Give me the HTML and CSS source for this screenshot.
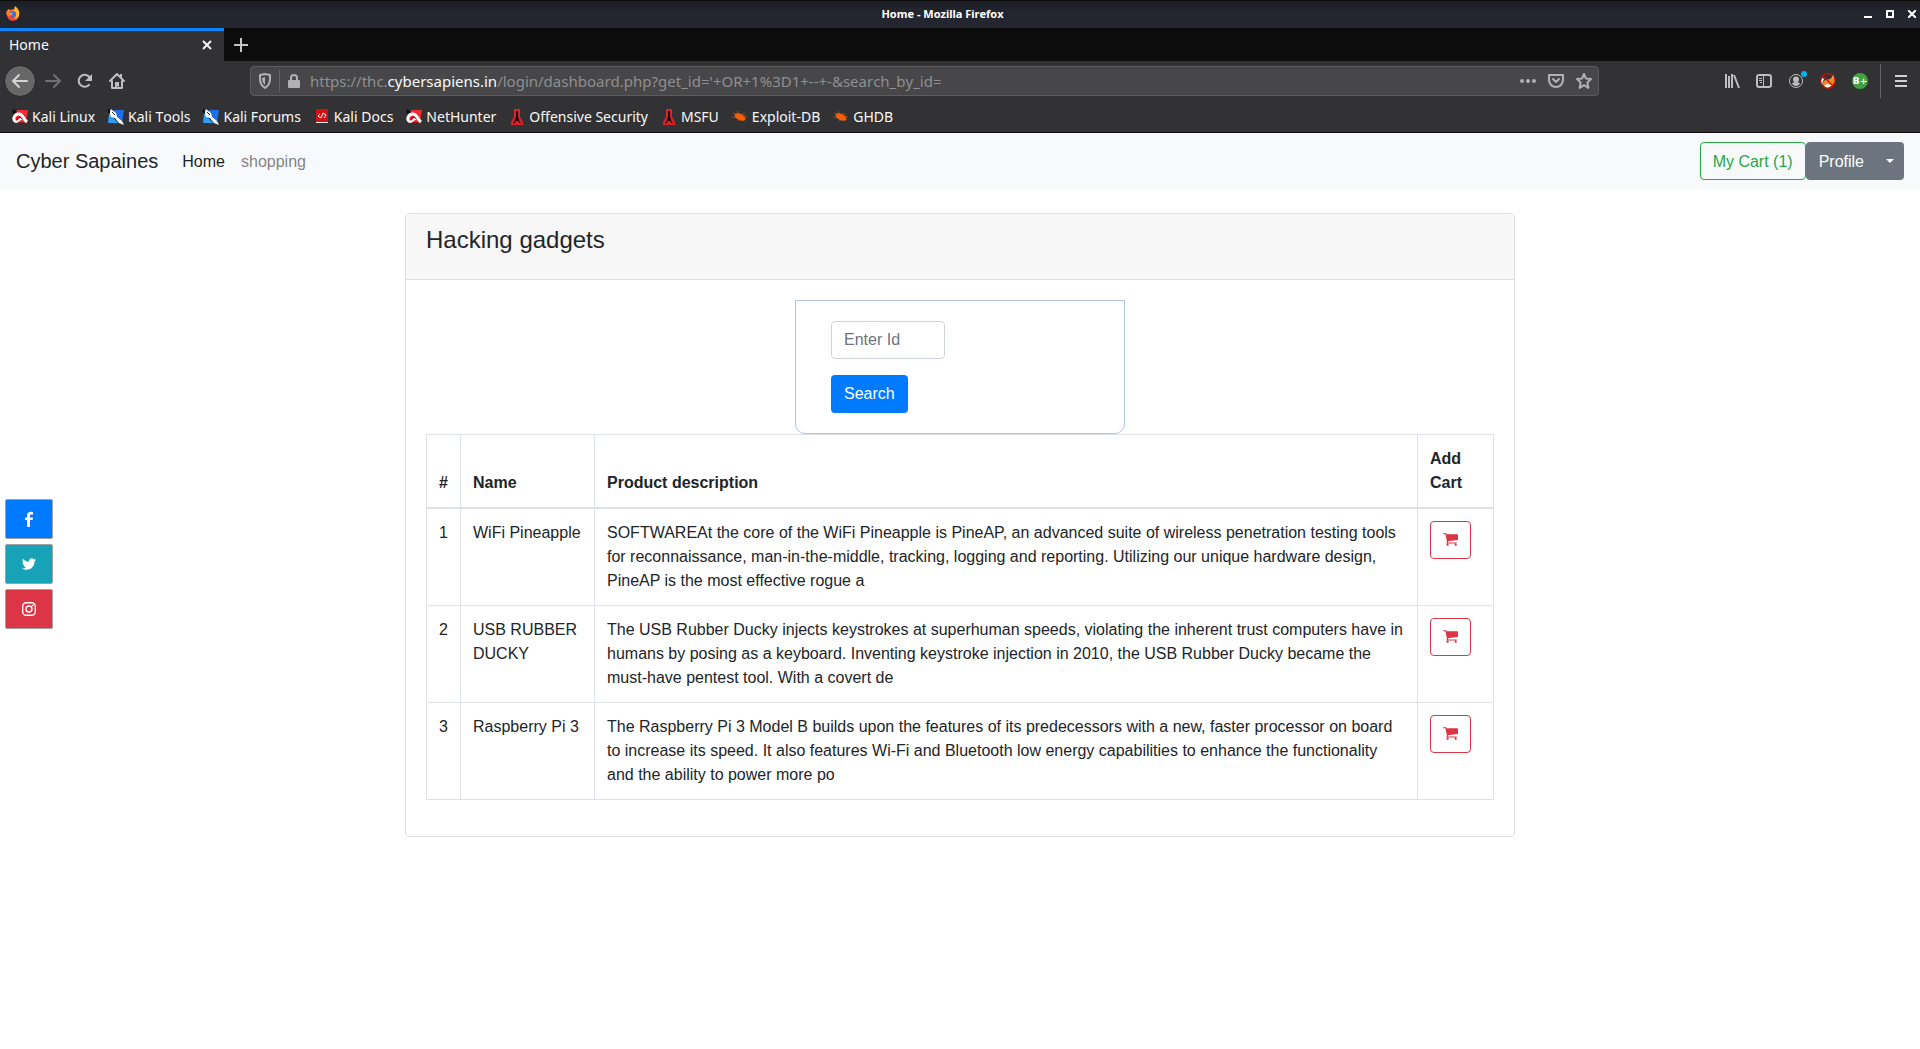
FILE: index.html
```html
<!DOCTYPE html>
<html lang="en">
<head>
<meta charset="utf-8">
<title>Home</title>
<link rel="stylesheet" href="styles.css">
</head>
<body>
<svg class="defs" width="0" height="0" aria-hidden="true">
  <symbol id="kali" viewBox="0 0 16 16"><path fill="#111" d="M0 0l7 3-6 2z"/><path fill="#f02b34" d="M5 1h11l-2 12H2z"/><path fill="#8d1722" d="M3 13h11l1 1H3z"/><path fill="none" stroke="#fff" stroke-width="3" d="M4 13C0 11 2 5 7 5c4 0 4 5 8 8"/><path fill="none" stroke="#fff" stroke-width="2" d="M4 13c3 0 3-4 6-3"/><path fill="none" stroke="#222" d="M5 11c0-3 4-4 5-1"/></symbol>
  <symbol id="knife" viewBox="0 0 16 16"><path fill="#1f6fe8" d="M5 1h11l-2 13-5-5z"/><path fill="#2b9df4" d="M1 4l9 10H0z"/><path fill="#111" d="M0 0l6 1-3 4-3-1z"/><path fill="#fff" d="M2 2l1-2 5 4 1 4 5 4 2 4-5-2-4-5-4-1-1-3z"/><path stroke="#222" d="M4 3l3 3"/></symbol>
  <symbol id="docs" viewBox="0 0 16 16"><path fill="#d40e12" d="M2 0h12v13H2z"/><path fill="#eee" d="M2 13h12v1H2z"/><path fill="#a00" d="M2 14h12v1H2z"/><path fill="none" stroke="#fff" d="M6 5L4 7l3 2 2-5 3 2-2 3"/></symbol>
  <symbol id="offsec" viewBox="0 0 16 16"><path fill="#d8232a" d="M5 0h6v8l3 5v3H2v-3l3-5z"/><path fill="#2a0808" d="M7 2h2v5l1 4 2 4-2-1-1-2H7l-1 2-2 1 2-4 1-4z"/></symbol>
  <symbol id="bug" viewBox="0 0 16 16"><path stroke="#9b4a1c" d="M1 4l5 3M0 8l6 1M5 2l3 4M9 5l4 0M6 12l2-3M12 7l3 1"/><ellipse cx="8" cy="8" rx="6" ry="3" fill="#f2600c" transform="rotate(28 8 8)"/></symbol>
  <symbol id="cart" viewBox="0 0 1664 1664"><path fill="currentColor" d="M640 1408q0 52-38 90t-90 38-90-38-38-90 38-90 90-38 90 38 38 90zm896 0q0 52-38 90t-90 38-90-38-38-90 38-90 90-38 90 38 38 90zm128-1088v512q0 24-16.500 42.500t-40.500 21.500l-1044 122q13 60 13 70 0 16-24 64h920q26 0 45 19t19 45-19 45-45 19H448q-26 0-45-19t-19-45q0-11 8-31.500t16-36 21.500-40 15.500-29.500L268 256H64q-26 0-45-19T0 192t19-45 45-19h256q16 0 28.500 6.500T368 150t13 24.500 8 26 5.500 29.500 4.500 26h1201q26 0 45 19t19 45z"/></symbol>
</svg>
<div class="browser">
  <div class="titlebar">
    <svg class="fox" width="16" height="16" viewBox="0 0 16 16"><circle cx="8" cy="9" r="6" fill="#f5413c"/><path fill="#ffb52b" d="M2 5l2-2 1 2 4-1 1-4c4 3 5 6 4 10-1 2-3 3-5 3 3-3 2-6-1-7z"/><path fill="#ff7a1f" d="M1 8l1-4 3 2 1 2-2 3z"/><circle cx="8" cy="8" r="3" fill="#426cd8"/><path fill="#ff9c28" d="M4 7l4 0-2 3z"/></svg>
    <span class="caption">Home - Mozilla Firefox</span>
    <div class="winctl">
      <button type="button" aria-label="Minimize"><svg width="8" height="8" viewBox="0 0 8 8"><path fill="#fff" d="M0 6h8v2H0z"/></svg></button>
      <button type="button" aria-label="Maximize"><svg width="8" height="8" viewBox="0 0 8 8"><path fill="none" stroke="#fff" stroke-width="2" d="M1 1h6v6H1z"/></svg></button>
      <button type="button" aria-label="Close"><svg width="8" height="8" viewBox="0 0 8 8"><path stroke="#fff" stroke-width="2" d="M0 0l8 8M8 0L0 8"/></svg></button>
    </div>
  </div>
  <div class="tabs">
    <div class="tab"><span>Home</span><button type="button" aria-label="Close tab"><svg width="10" height="10" viewBox="0 0 10 10"><path stroke="#f4f4f4" stroke-width="2" d="M1 1l8 8M9 1L1 9"/></svg></button></div>
    <button class="newtab" type="button" aria-label="New tab"><svg width="14" height="14" viewBox="0 0 14 14"><path stroke="#c5c5c6" stroke-width="2" d="M7 0v14M0 7h14"/></svg></button>
  </div>
  <div class="toolbar">
    <div class="navbtns">
      <button class="back" type="button" aria-label="Back"><svg width="16" height="16" viewBox="0 0 16 16"><path fill="none" stroke="#d4d4d4" stroke-width="2" stroke-linecap="round" stroke-linejoin="round" d="M15 8H2M7 2L1 8l6 6"/></svg></button>
      <button type="button" aria-label="Forward"><svg width="16" height="16" viewBox="0 0 16 16"><path fill="none" stroke="#707072" stroke-width="2" stroke-linecap="round" stroke-linejoin="round" d="M1 8h13M9 2l6 6-6 6"/></svg></button>
      <button type="button" aria-label="Reload"><svg width="16" height="16" viewBox="0 0 16 16"><path fill="none" stroke="#bebebf" stroke-width="2" stroke-linecap="round" d="M12 12a6 6 0 1 1 1-7"/><path fill="#bebebf" d="M15 1v7H8z"/></svg></button>
      <button type="button" aria-label="Home"><svg width="16" height="16" viewBox="0 0 16 16"><path fill="none" stroke="#bebebf" stroke-width="2" stroke-linecap="round" stroke-linejoin="round" d="M1 8l7-7 7 7M3 8v7h10V8"/><path fill="#bebebf" d="M6 9h4v6H9v-2H8v2H6zM11 1h2v4h-2z"/></svg></button>
    </div>
    <div class="urlbar">
      <svg width="16" height="16" viewBox="0 0 16 16"><path fill="none" stroke="#b1b1b3" stroke-width="2" stroke-linejoin="round" d="M3 2l5-1 5 1v4c0 4-2 7-5 9-3-2-5-5-5-9z"/><path fill="#b1b1b3" d="M5 5l3-1v8c-2-2-3-4-3-7z"/></svg>
      <i class="sep"></i>
      <svg width="16" height="16" viewBox="0 0 16 16"><rect x="2" y="7" width="12" height="8" rx="1" fill="#b1b1b3"/><path fill="none" stroke="#b1b1b3" stroke-width="2" d="M5 8V5a3 3 0 0 1 6 0v3"/></svg>
      <div class="url">https://thc.<b>cybersapiens.in</b>/login/dashboard.php?get_id='+OR+1%3D1+--+-&amp;search_by_id=</div>
      <div class="urlactions">
        <svg width="16" height="16" viewBox="0 0 16 16"><g fill="#b1b1b3"><circle cx="2" cy="8" r="2"/><circle cx="8" cy="8" r="2"/><circle cx="14" cy="8" r="2"/></g></svg>
        <svg width="16" height="16" viewBox="0 0 16 16"><path fill="none" stroke="#b1b1b3" stroke-width="2" stroke-linejoin="round" d="M1 2h14v5a7 7 0 0 1-14 0z"/><path fill="none" stroke="#b1b1b3" stroke-width="2" stroke-linecap="round" stroke-linejoin="round" d="M5 6l3 3 3-3"/></svg>
        <svg width="16" height="16" viewBox="0 0 16 16"><path fill="none" stroke="#b1b1b3" stroke-width="2" stroke-linejoin="round" d="M8 1l2 4.600 5 .5-3.700 3.400L12.400 15 8 12.200 3.600 15l1.100-5.500L1 6.100l5-.5z"/></svg>
      </div>
    </div>
    <div class="tools">
      <svg width="16" height="16" viewBox="0 0 16 16"><path stroke="#bebebf" stroke-width="2" d="M2 1v14M5 3v12M8 1v14M10 2l5 13"/></svg>
      <svg width="16" height="16" viewBox="0 0 16 16"><rect x="1" y="2" width="14" height="12" rx="2" fill="none" stroke="#bebebf" stroke-width="2"/><path stroke="#bebebf" d="M7.500 2v12M3 5.500h3M3 7.500h3M4 9.500h2"/></svg>
      <svg class="account-icon" width="16" height="16" viewBox="0 0 16 16"><circle cx="8" cy="8" r="6.500" fill="none" stroke="#bebebf"/><circle cx="8" cy="6.500" r="3" fill="#bebebf"/><path fill="#bebebf" d="M4 10c1-1 7-1 8 0-1 4-7 4-8 0z"/><circle cx="16" cy="1" r="3" fill="#00b3f4"/></svg>
      <svg width="16" height="16" viewBox="0 0 16 16"><path fill="#f08a24" d="M2 11l3-4 5-1 4-4 1 6-3 5-6 2z"/><path fill="#fff" d="M1 4l3 2-2 5H1zM12 3l2-1v4zM4 13l3-2 5 1-4 3z"/><circle cx="8" cy="8" r="7.300" fill="none" stroke="#d20a0a" stroke-width="1.200"/><path stroke="#d20a0a" stroke-width="1.200" d="M3 3l10 10"/></svg>
      <span class="badge">B+</span>
      <i class="sep"></i>
      <button type="button" aria-label="Open menu"><svg width="12" height="12" viewBox="0 0 12 12"><path stroke="#d0d0d1" stroke-width="2" d="M0 1h12M0 6h12M0 11h12"/></svg></button>
    </div>
  </div>
  <nav class="bookmarks" aria-label="Bookmarks">
    <a href="#"><svg><use href="#kali"/></svg>Kali Linux</a>
    <a href="#"><svg><use href="#knife"/></svg>Kali Tools</a>
    <a href="#"><svg><use href="#knife"/></svg>Kali Forums</a>
    <a href="#"><svg><use href="#docs"/></svg>Kali Docs</a>
    <a href="#"><svg><use href="#kali"/></svg>NetHunter</a>
    <a href="#"><svg><use href="#offsec"/></svg>Offensive Security</a>
    <a href="#"><svg><use href="#offsec"/></svg>MSFU</a>
    <a href="#"><svg><use href="#bug"/></svg>Exploit-DB</a>
    <a href="#"><svg><use href="#bug"/></svg>GHDB</a>
  </nav>
</div>
<nav class="navbar">
  <a class="brand" href="#">Cyber Sapaines</a>
  <a class="link active" href="#">Home</a>
  <a class="link" href="#">shopping</a>
  <div class="account">
    <button class="btn cartbtn" type="button">My Cart (1)</button>
    <div class="group"><button class="btn profile" type="button">Profile</button><button class="btn toggle" type="button" aria-label="Profile menu"></button></div>
  </div>
</nav>
<aside class="social">
  <a class="fb" href="#" aria-label="Facebook"><svg width="16" height="16" viewBox="0 0 16 16"><path fill="#fff" d="M12 1v2.500h-1.500C9.300 3.500 9 4 9 4.800V6.500h3l-.4 2.600H9V16H6V9.100H4V6.500h2V4.700C6 2.200 7.500.8 9.800.8z"/></svg></a>
  <a class="tw" href="#" aria-label="Twitter"><svg width="16" height="16" viewBox="0 0 1792 1792"><path fill="#fff" d="M1684 408q-67 98-162 167 1 14 1 42 0 130-38 259.500T1369.500 1125 1185 1335.500t-258 146-323 54.500q-271 0-496-145 35 4 78 4 225 0 401-138-105-2-188-64.500T285 1033q33 5 61 5 43 0 85-11-112-23-185.500-111.500T172 710v-4q68 38 146 41-66-44-105-115t-39-154q0-88 44-163 121 149 294.500 238.500T884 653q-8-38-8-74 0-134 94.500-228.500T1199 256q140 0 236 102 109-21 205-78-37 115-142 178 93-10 186-50z"/></svg></a>
  <a class="ig" href="#" aria-label="Instagram"><svg width="16" height="16" viewBox="0 0 16 16"><rect x="1.700" y="1.700" width="12.600" height="12.600" rx="3.500" fill="none" stroke="#fff" stroke-width="1.400"/><circle cx="8" cy="8" r="3" fill="none" stroke="#fff" stroke-width="1.400"/><circle cx="11.800" cy="4.300" r=".9" fill="#fff"/></svg></a>
</aside>
<main class="card">
  <header><h4>Hacking gadgets</h4></header>
  <div class="body">
    <form class="search">
      <input type="text" placeholder="Enter Id" aria-label="Enter Id">
      <button class="btn primary" type="button">Search</button>
    </form>
    <table>
      <thead><tr><th class="num">#</th><th class="name">Name</th><th>Product description</th><th class="add">Add Cart</th></tr></thead>
      <tbody>
        <tr><td>1</td><td>WiFi Pineapple</td><td>SOFTWAREAt the core of the WiFi Pineapple is PineAP, an advanced suite of wireless penetration testing tools for reconnaissance, man-in-the-middle, tracking, logging and reporting. Utilizing our unique hardware design, PineAP is the most effective rogue a</td><td><button class="btn danger" type="button" aria-label="Add WiFi Pineapple to cart"><svg><use href="#cart"/></svg></button></td></tr>
        <tr><td>2</td><td>USB RUBBER DUCKY</td><td>The USB Rubber Ducky injects keystrokes at superhuman speeds, violating the inherent trust computers have in humans by posing as a keyboard. Inventing keystroke injection in 2010, the USB Rubber Ducky became the must-have pentest tool. With a covert de</td><td><button class="btn danger" type="button" aria-label="Add USB Rubber Ducky to cart"><svg><use href="#cart"/></svg></button></td></tr>
        <tr><td>3</td><td>Raspberry Pi 3</td><td>The Raspberry Pi 3 Model B builds upon the features of its predecessors with a new, faster processor on board to increase its speed. It also features Wi-Fi and Bluetooth low energy capabilities to enhance the functionality and the ability to power more po</td><td><button class="btn danger" type="button" aria-label="Add Raspberry Pi 3 to cart"><svg><use href="#cart"/></svg></button></td></tr>
      </tbody>
    </table>
  </div>
</main>
</body>
</html>
```
FILE: styles.css
```css
* { box-sizing: border-box; }
body { margin: 0; background: #fff; color: #212529; font: 16px/24px "Liberation Sans", Arial, sans-serif; }
a { text-decoration: none; color: inherit; }
button { font: inherit; color: inherit; background: none; border: 0; padding: 0; }
svg { display: block; flex: none; }
.defs { position: absolute; }

/* browser window */
.browser { background: #323234; color: #f9f9fa; font: 15px/20px "Noto Sans", "Open Sans", sans-serif; font-kerning: none; border-bottom: 1px solid #0c0c0d; }
.titlebar { display: flex; align-items: center; height: 28px; padding: 0 4px 2px 5px; background: linear-gradient(#1c1d23, #23262f 40%); border-top: 1px solid #0c0c0d; }
.caption { flex: 1; text-align: center; font-size: 11px; font-weight: 700; color: #fff; }
.winctl { display: flex; justify-content: flex-end; gap: 14px; }
.tabs { display: flex; height: 33px; background: #0c0c0d; }
.tab { display: flex; align-items: center; justify-content: space-between; width: 224px; padding: 0 12px 2px 9px; font-size: 14px; background: #323234; border-top: 3px solid #0a84ff; }
.newtab { padding: 0 10px; }
.toolbar { display: flex; align-items: center; height: 40px; padding: 0 13px 0 4px; }
.navbtns { display: flex; align-items: center; gap: 16px; width: 246px; }
.back { display: grid; place-items: center; width: 32px; height: 32px; margin-right: -7px; border-radius: 50%; background: #676768; border: 1px solid #232325; }
.urlbar { display: flex; align-items: center; gap: 6px; flex: 1; height: 30px; padding: 0 6px; background: #474749; border: 1px solid #5c5c5e; border-radius: 4px; }
.sep { width: 1px; height: 22px; background: #646466; }
.url { flex: 1; padding-left: 2px; color: #8f8f91; white-space: nowrap; }
.url b { font-weight: 400; color: #f9f9fa; }
.urlactions { display: flex; gap: 12px; }
.tools { display: flex; align-items: center; justify-content: flex-end; gap: 16px; width: 308px; }
.tools .sep { height: 34px; margin: 0 -2px 0 -4px; }
.account-icon { overflow: visible; }
.badge { display: grid; place-items: center; width: 16px; height: 16px; border-radius: 50%; background: #3fa142; color: #fff; font: 700 9px/12px "DejaVu Sans", sans-serif; }
.bookmarks { display: flex; align-items: center; gap: 13px; height: 31px; padding: 0 12px; font-size: 14px; }
.bookmarks a { display: flex; align-items: center; gap: 4px; }
.bookmarks svg { width: 16px; height: 16px; }

/* site navigation */
.navbar { display: flex; align-items: center; gap: 16px; height: 56px; padding: 0 16px; background: #f8f9fa; }
.brand { font-size: 20px; margin-right: 8px; }
.link { padding-top: 2px; color: rgba(0, 0, 0, .5); }
.link.active { color: rgba(0, 0, 0, .9); }
.account { display: flex; margin-left: auto; }
.group { display: flex; }
.btn { height: 38px; padding: 0 12px; border: 1px solid transparent; border-radius: 4px; }
.cartbtn, .profile { padding-top: 2px; }
.cartbtn { color: #28a745; border-color: #28a745; }
.profile { background: #6c757d; color: #fff; border-radius: 4px 0 0 4px; }
.toggle { width: 27px; padding: 0 8px; background: #6c757d; border-radius: 0 4px 4px 0; }
.toggle::after { content: ""; display: block; width: 0; border: 4px solid transparent; border-top-color: #fff; border-bottom: 0; }

/* share links pinned to the window edge */
.social { position: fixed; left: 5px; top: 50%; margin-top: -26px; display: flex; flex-direction: column; gap: 5px; }
.social a { display: grid; place-items: center; width: 48px; height: 40px; border: 1px solid #a0a0a0; border-radius: 2px; }
.fb { background: #007bff; }
.tw { background: #17a2b8; }
.ig { background: #dc3545; }

/* product card */
.card { max-width: 1110px; margin: 24px auto; border: 1px solid #dfdfdf; border-radius: 4px; }
.card header { padding: 12px 20px 25px; background: #f7f7f7; border-bottom: 1px solid #dfdfdf; border-radius: 3px 3px 0 0; }
h4 { margin: 0; font-size: 24px; line-height: 28px; font-weight: 400; }
.body { padding: 20px 20px 36px; }
.search { display: flex; flex-direction: column; align-items: flex-start; gap: 16px; width: 330px; margin: 0 auto; padding: 20px 35px; border: 1px solid #b0c4de; border-radius: 0 0 10px 10px; }
.search input { width: 114px; height: 38px; padding: 0 12px; border: 1px solid #ced4da; border-radius: 4px; font: inherit; }
.search input::placeholder { color: #6c757d; opacity: 1; }
.primary { background: #007bff; color: #fff; }
table { width: 100%; border-collapse: collapse; }
th, td { padding: 12px; border: 1px solid #dee2e6; text-align: left; vertical-align: top; }
th { vertical-align: bottom; border-bottom-width: 2px; }
.num { width: 34px; }
.name { width: 134px; }
.add { width: 76px; }
.danger { display: block; padding-bottom: 2px; color: #dc3545; border-color: #dc3545; }
.danger svg { width: 15px; height: 15px; }
```
